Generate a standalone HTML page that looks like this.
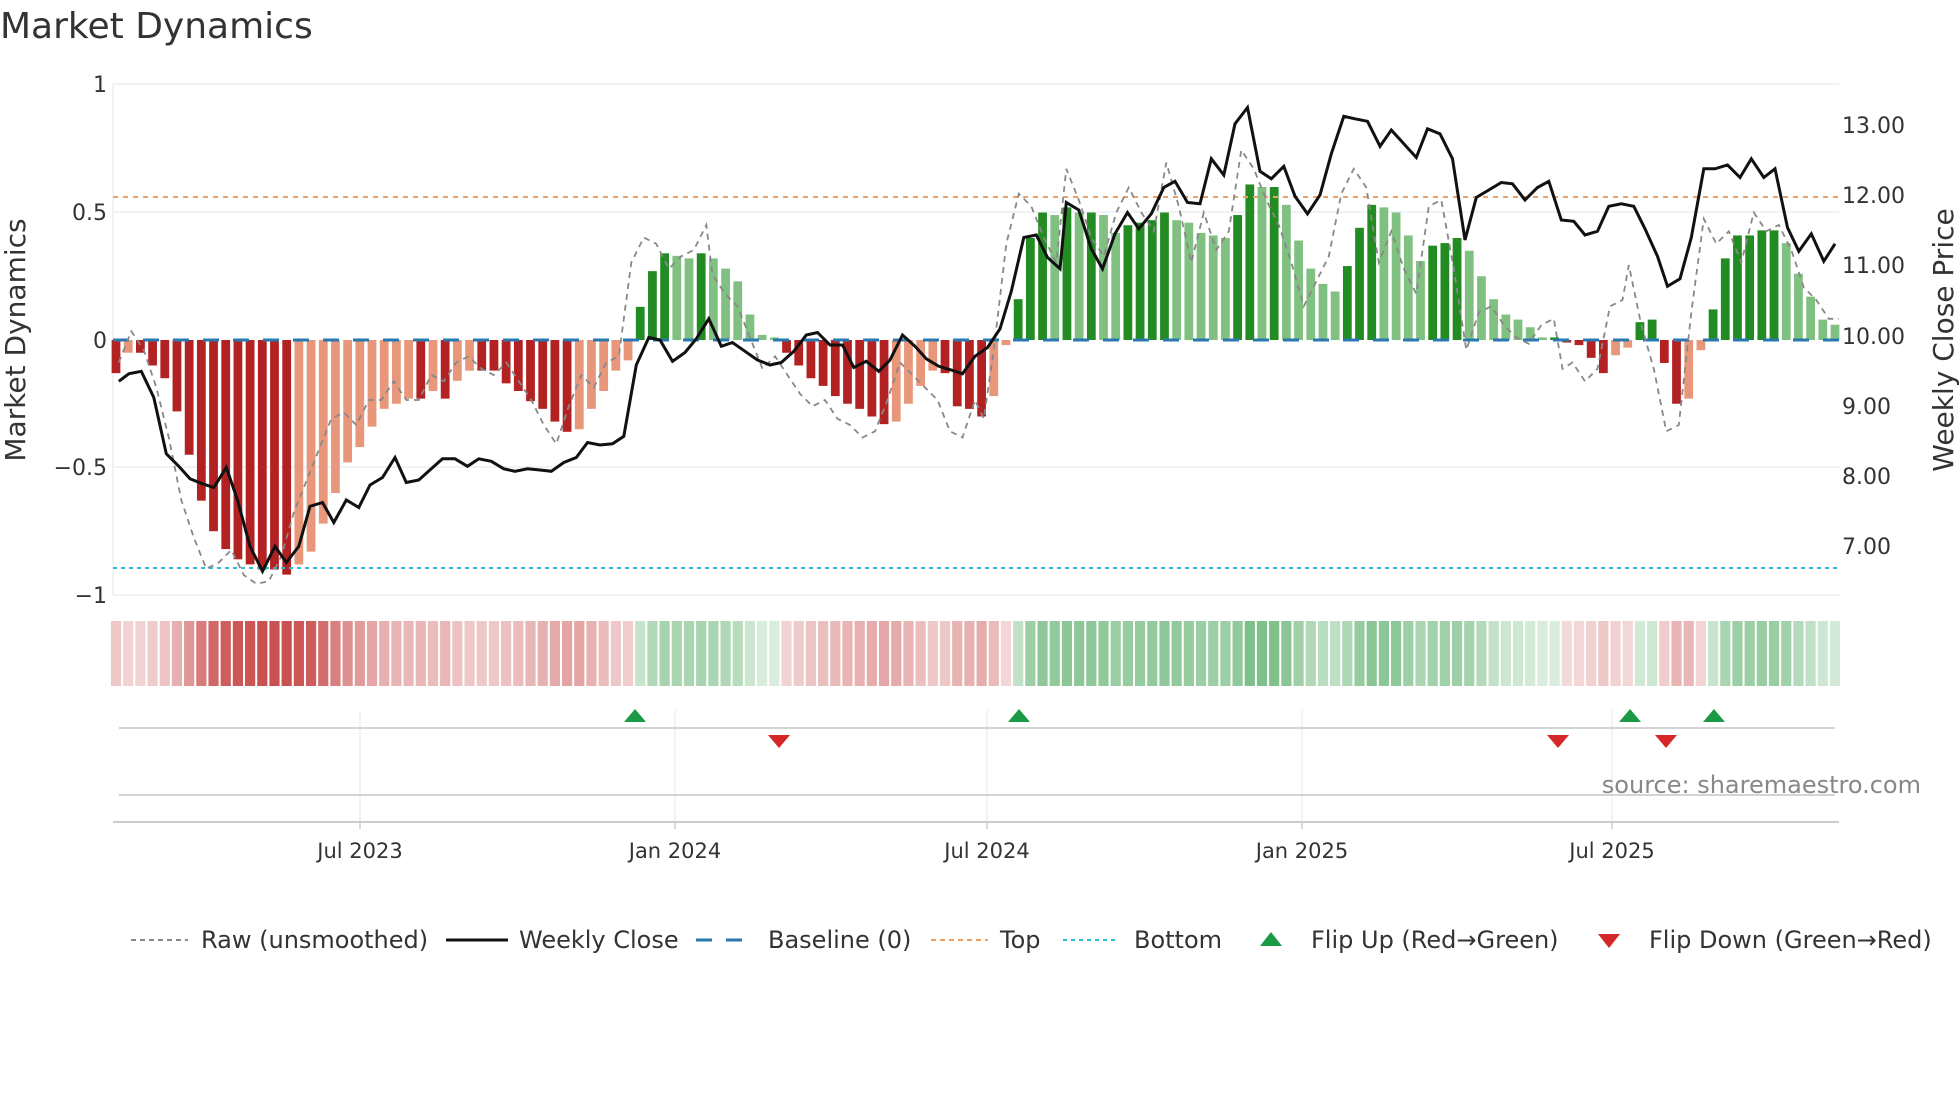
<!DOCTYPE html>
<html><head><meta charset="utf-8"><style>
html,body{margin:0;padding:0;background:#fff;}
svg{display:block;font-family:"DejaVu Sans","Liberation Sans",sans-serif;}
</style></head><body>
<svg id="s" width="1960" height="1102" viewBox="0 0 1960 1102" xmlns="http://www.w3.org/2000/svg">
<rect width="1960" height="1102" fill="#fff"/>
<text x="0" y="38" font-size="36" fill="#333">Market Dynamics</text>
<g stroke="#eceff3" stroke-width="1.5">
<line x1="113" y1="84" x2="1839" y2="84"/><line x1="113" y1="212" x2="1839" y2="212"/>
<line x1="113" y1="467" x2="1839" y2="467"/><line x1="113" y1="595" x2="1839" y2="595"/>
<line x1="113" y1="84" x2="113" y2="595"/>
</g>
<g id="bars"></g>
<line x1="113" y1="197" x2="1839" y2="197" stroke="#f0a060" stroke-width="2" stroke-dasharray="5,5"/>
<line x1="113" y1="568" x2="1839" y2="568" stroke="#2bc0d8" stroke-width="2" stroke-dasharray="4,4"/>
<line x1="113" y1="340" x2="1839" y2="340" stroke="#2a78b0" stroke-width="3" stroke-dasharray="16,14"/>
<path id="raw" fill="none" stroke="#888" stroke-width="1.8" stroke-dasharray="6,5"/>
<path id="price" fill="none" stroke="#111" stroke-width="3"/>
<g font-size="22" fill="#333" text-anchor="end">
<text x="107" y="92">1</text><text x="107" y="220">0.5</text><text x="107" y="348">0</text>
<text x="107" y="475">−0.5</text><text x="107" y="603">−1</text>
</g>
<g font-size="22" fill="#333">
<text x="1842" y="133">13.00</text><text x="1842" y="203">12.00</text><text x="1842" y="273">11.00</text>
<text x="1842" y="344">10.00</text><text x="1842" y="414">9.00</text><text x="1842" y="484">8.00</text><text x="1842" y="554">7.00</text>
</g>
<text transform="translate(25,340) rotate(-90)" font-size="28" fill="#333" text-anchor="middle">Market Dynamics</text>
<text transform="translate(1953,340) rotate(-90)" font-size="28" fill="#333" text-anchor="middle">Weekly Close Price</text>
<g id="heat"></g>
<g stroke="#eceff3" stroke-width="1.5">
<line x1="360" y1="710" x2="360" y2="822"/><line x1="675" y1="710" x2="675" y2="822"/>
<line x1="987" y1="710" x2="987" y2="822"/><line x1="1302" y1="710" x2="1302" y2="822"/><line x1="1612" y1="710" x2="1612" y2="822"/>
</g>
<line x1="119" y1="728" x2="1835" y2="728" stroke="#d4d4d4" stroke-width="2"/>
<line x1="119" y1="795" x2="1835" y2="795" stroke="#d4d4d4" stroke-width="2"/>
<line x1="113" y1="822" x2="1839" y2="822" stroke="#ccc" stroke-width="2"/>
<g stroke="#ccc" stroke-width="1.5">
<line x1="360" y1="822" x2="360" y2="829"/><line x1="675" y1="822" x2="675" y2="829"/><line x1="987" y1="822" x2="987" y2="829"/><line x1="1302" y1="822" x2="1302" y2="829"/><line x1="1612" y1="822" x2="1612" y2="829"/>
</g>
<g fill="#1a9a45">
<polygon points="624,722 646,722 635,709"/><polygon points="1008,722 1030,722 1019,709"/>
<polygon points="1619,722 1641,722 1630,709"/><polygon points="1703,722 1725,722 1714,709"/>
</g>
<g fill="#d62728">
<polygon points="768,735 790,735 779,748"/><polygon points="1547,735 1569,735 1558,748"/><polygon points="1655,735 1677,735 1666,748"/>
</g>
<text x="1921" y="793" font-size="24" fill="#888" text-anchor="end">source: sharemaestro.com</text>
<g font-size="21" fill="#333" text-anchor="middle">
<text x="360" y="858">Jul 2023</text><text x="675" y="858">Jan 2024</text><text x="987" y="858">Jul 2024</text>
<text x="1302" y="858">Jan 2025</text><text x="1612" y="858">Jul 2025</text>
</g>
<line x1="131" y1="940" x2="188" y2="940" stroke="#888" stroke-width="2" stroke-dasharray="5,4"/>
<line x1="446" y1="940" x2="508" y2="940" stroke="#111" stroke-width="3"/>
<line x1="696" y1="940" x2="754" y2="940" stroke="#2a78b0" stroke-width="3" stroke-dasharray="16,14"/>
<line x1="931" y1="940" x2="988" y2="940" stroke="#f0a060" stroke-width="2" stroke-dasharray="5,4"/>
<line x1="1063" y1="940" x2="1119" y2="940" stroke="#2bc0d8" stroke-width="2" stroke-dasharray="4,4"/>
<polygon points="1260,946 1282,946 1271,932" fill="#1a9a45"/>
<polygon points="1598,934 1620,934 1609,948" fill="#d62728"/>
<g font-size="24" fill="#333">
<text x="201" y="948">Raw (unsmoothed)</text><text x="519" y="948">Weekly Close</text>
<text x="768" y="948">Baseline (0)</text><text x="1000" y="948">Top</text><text x="1134" y="948">Bottom</text>
<text x="1311" y="948">Flip Up (Red→Green)</text><text x="1649" y="948">Flip Down (Green→Red)</text>
</g>
</svg>
<script>
var V=[-.13,-.05,-.05,-.1,-.15,-.28,-.45,-.63,-.75,-.82,-.86,-.88,-.9,-.9,-.92,-.88,-.83,-.72,-.6,-.48,-.42,-.34,-.27,-.25,-.23,-.23,-.2,-.23,-.16,-.12,-.12,-.12,-.17,-.2,-.24,-.27,-.32,-.36,-.35,-.27,-.2,-.12,-.08,.13,.27,.34,.33,.32,.34,.32,.28,.23,.1,.02,.01,-.05,-.1,-.15,-.18,-.22,-.25,-.27,-.3,-.33,-.32,-.25,-.18,-.12,-.13,-.26,-.27,-.3,-.22,-.02,.16,.4,.5,.49,.52,.5,.5,.49,.42,.45,.46,.47,.5,.47,.46,.42,.41,.4,.49,.61,.6,.6,.53,.39,.28,.22,.19,.29,.44,.53,.52,.5,.41,.31,.37,.38,.4,.35,.25,.16,.1,.08,.05,.01,.01,-.01,-.02,-.07,-.13,-.06,-.03,.07,.08,-.09,-.25,-.23,-.04,.12,.32,.41,.41,.43,.43,.38,.26,.17,.08,.06];
var n=V.length,x0=116,x1=1835,p=(x1-x0)/(n-1),bw=p*0.72,ns="http://www.w3.org/2000/svg";
var B=document.getElementById('bars'),H=document.getElementById('heat');
function mk(t,a,par){var e=document.createElementNS(ns,t);for(var k in a)e.setAttribute(k,a[k]);par.appendChild(e);}
for(var i=0;i<n;i++){var v=V[i],x=x0+i*p,dark=true;
 if(i>0){dark=Math.abs(v)>=Math.abs(V[i-1])-0.005;}
 var c=v>=0?(dark?'#228b22':'#80c080'):(dark?'#b22222':'#e8977a');
 var y=340-v*255;mk('rect',{x:x-bw/2,y:Math.min(y,340),width:bw,height:Math.max(1.5,Math.abs(v*255)),fill:c},B);
 var a=0.2+0.75*Math.min(1,Math.abs(v)/0.9);
 mk('rect',{x:x-p/2+1,y:621,width:p-2,height:65,fill:v>=0?'rgba(40,150,60,'+Math.min(1,a*0.85)+')':'rgba(190,40,40,'+Math.min(1,a*0.85)+')'},H);}
var P=[95,305,103,299,113,297,123,318,133,363,143,373,152,383,162,387,171,390,181,374,190,400,200,437,210,457,220,437,229,450,239,437,248,405,258,402,267,418,277,400,287,406,296,388,306,382,316,366,325,386,335,384,345,375,354,367,364,367,374,373,383,367,393,369,403,375,412,377,422,375,432,376,441,377,451,370,461,366,470,354,480,356,490,355,499,349,509,292,519,270,528,272,538,289,548,282,557,271,567,255,577,277,586,274,596,281,606,288,616,292,625,290,635,281,645,268,654,266,664,276,674,276,683,294,693,289,703,297,712,288,722,268,732,277,741,287,751,293,761,296,770,299,780,285,790,278,800,263,809,233,819,190,829,188,838,206,848,215,853,162,863,168,873,199,882,215,892,187,902,170,911,183,921,171,931,150,940,145,950,162,960,163,969,127,979,140,988,99,998,86,1008,137,1017,143,1027,133,1036,157,1046,171,1056,156,1065,123,1075,93,1084,95,1094,97,1104,117,1113,104,1123,115,1133,126,1142,103,1152,107,1162,127,1172,192,1181,158,1191,152,1201,146,1210,147,1220,160,1230,150,1239,145,1249,176,1259,177,1268,188,1278,185,1287,165,1297,163,1307,165,1316,183,1326,205,1334,229,1344,223,1353,190,1363,135,1372,135,1382,132,1392,142,1401,127,1411,142,1420,135,1430,182,1439,201,1449,187,1459,209,1468,195];
var R=[95,290,105,265,115,280,125,310,135,350,145,400,155,430,165,455,175,450,185,440,195,460,205,467,215,465,225,445,235,410,245,385,255,360,265,335,275,330,285,340,295,320,305,320,315,305,325,320,335,320,345,300,355,305,365,290,375,285,385,295,395,300,405,290,415,305,425,320,435,340,445,355,455,325,465,300,475,310,485,290,495,285,505,210,515,190,525,195,535,215,545,205,555,200,565,180,570,220,580,235,590,245,600,270,610,295,620,285,630,300,640,315,650,325,660,320,670,335,680,340,690,350,700,345,710,320,720,290,730,300,740,310,750,320,760,345,770,350,780,320,787,335,795,280,805,195,815,155,825,165,835,190,845,210,853,135,863,160,873,190,883,205,893,170,903,150,913,170,923,185,933,130,943,165,953,210,963,170,973,200,983,185,993,120,1003,135,1013,160,1023,180,1033,210,1043,245,1053,225,1063,205,1073,155,1083,135,1093,150,1103,210,1113,185,1123,215,1133,235,1143,165,1153,160,1163,215,1173,280,1183,250,1193,245,1203,260,1213,270,1223,275,1233,260,1243,255,1250,295,1258,290,1268,305,1278,295,1288,245,1298,240,1303,212,1313,260,1323,295,1333,345,1343,340,1353,250,1363,175,1373,195,1383,185,1393,210,1403,170,1413,185,1423,180,1433,200,1443,230,1453,240,1463,255,1471,255];
function path(a){var d='';for(var i=0;i<a.length;i+=2)d+=(i?'L':'M')+(a[i]*1.25).toFixed(1)+','+(a[i+1]*1.25).toFixed(1);return d;}
document.getElementById('price').setAttribute('d',path(P));
document.getElementById('raw').setAttribute('d',path(R));
</script>
</body></html>
